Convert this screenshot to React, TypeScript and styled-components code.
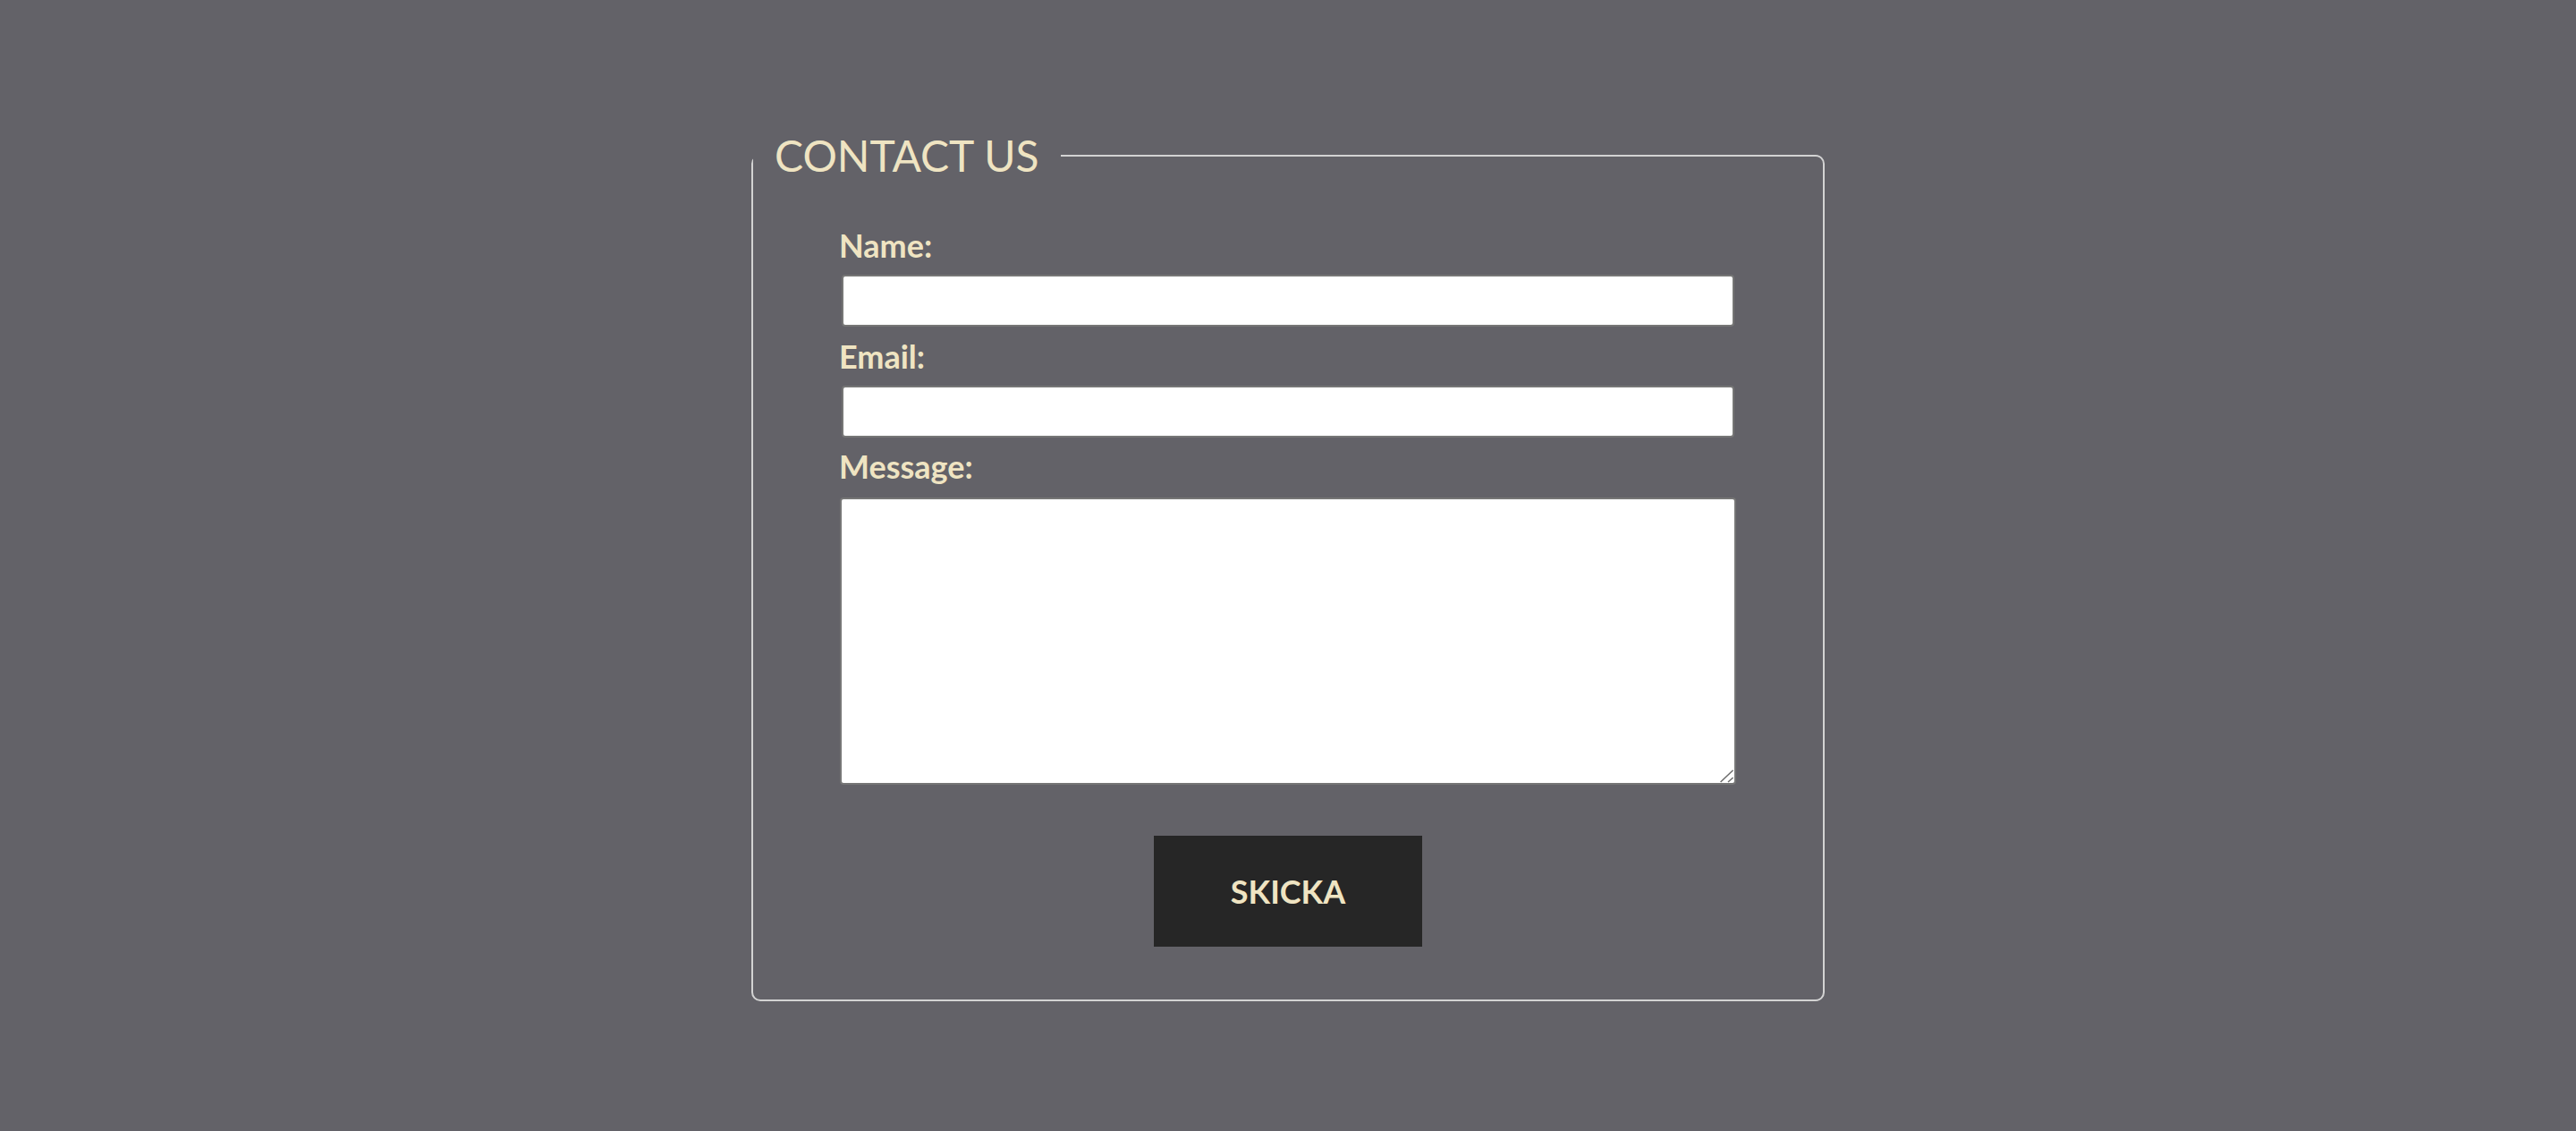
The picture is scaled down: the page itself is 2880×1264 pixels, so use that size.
import React from 'react'
import styled, { createGlobalStyle } from 'styled-components'

const GlobalStyle = createGlobalStyle`
  html, body {
    margin: 0;
    padding: 0;
    background: #636268;
    font-family: Lato, "Noto Sans", sans-serif;
  }
`

const cream = '#efe4c2'

const Page = styled.div`
  padding-top: 145px;
  min-height: 1264px;
  box-sizing: border-box;
`
const Form = styled.form`
  margin: 0;
`
const Fieldset = styled.fieldset`
  box-sizing: border-box;
  width: 1200px;
  margin: 0 auto;
  padding: 50px 0 59px;
  border: 2px solid #d3d3d3;
  border-radius: 10px;
  min-inline-size: 0;
`
const Legend = styled.legend`
  padding: 0 24px;
  font-size: 48px;
  line-height: 58px;
  font-weight: 400;
  color: ${cream};
`
const Fields = styled.div`
  padding: 0 98px;
`
const Label = styled.label`
  display: block;
  font-size: 36px;
  line-height: 43px;
  font-weight: 700;
  color: ${cream};
  margin: 0 0 11px -2px;
`
const Input = styled.input`
  display: block;
  box-sizing: border-box;
  width: calc(100% - 2px);
  height: 58px;
  margin: 0 0 11.5px 1px;
  border: 2px solid #767676;
  border-radius: 4px;
  background: #fff;
  font-family: Lato, sans-serif;
  font-size: 26px;
  padding: 2px 6px;
`
const AreaWrap = styled.div`
  position: relative;
  width: calc(100% + 2px);
  margin: 13px 0 0 -1px;
`
const TextArea = styled.textarea`
  display: block;
  box-sizing: border-box;
  width: 100%;
  height: 321px;
  margin: 0;
  border: 2px solid #767676;
  border-radius: 4px;
  background: #fff;
  font-family: Lato, sans-serif;
  font-size: 26px;
  padding: 4px 6px;
  resize: none;
`
const Grip = styled.svg`
  position: absolute;
  right: 0;
  bottom: 0;
  width: 20px;
  height: 20px;
  pointer-events: none;
`
const Actions = styled.div`
  display: flex;
  justify-content: center;
  margin-top: 57px;
`
const SubmitButton = styled.button`
  width: 300px;
  height: 124px;
  border: none;
  background: #262626;
  color: ${cream};
  font-family: Lato, sans-serif;
  font-size: 36px;
  font-weight: 700;
  cursor: pointer;
`

export default function App() {
  return (
    <Page>
      <GlobalStyle />
      <Form onSubmit={e => e.preventDefault()}>
        <Fieldset>
          <Legend>CONTACT US</Legend>
          <Fields>
            <Label htmlFor="name">Name:</Label>
            <Input id="name" type="text" />
            <Label htmlFor="email">Email:</Label>
            <Input id="email" type="email" />
            <Label htmlFor="message">Message:</Label>
            <AreaWrap>
              <TextArea id="message" />
              <Grip viewBox="0 0 20 20">
                <path d="M2.6 17 L16.6 3.7 M11 17 L16.6 12" stroke="#6b6b6b" strokeWidth="1.5" fill="none" />
              </Grip>
            </AreaWrap>
            <Actions>
              <SubmitButton type="submit">SKICKA</SubmitButton>
            </Actions>
          </Fields>
        </Fieldset>
      </Form>
    </Page>
  )
}
